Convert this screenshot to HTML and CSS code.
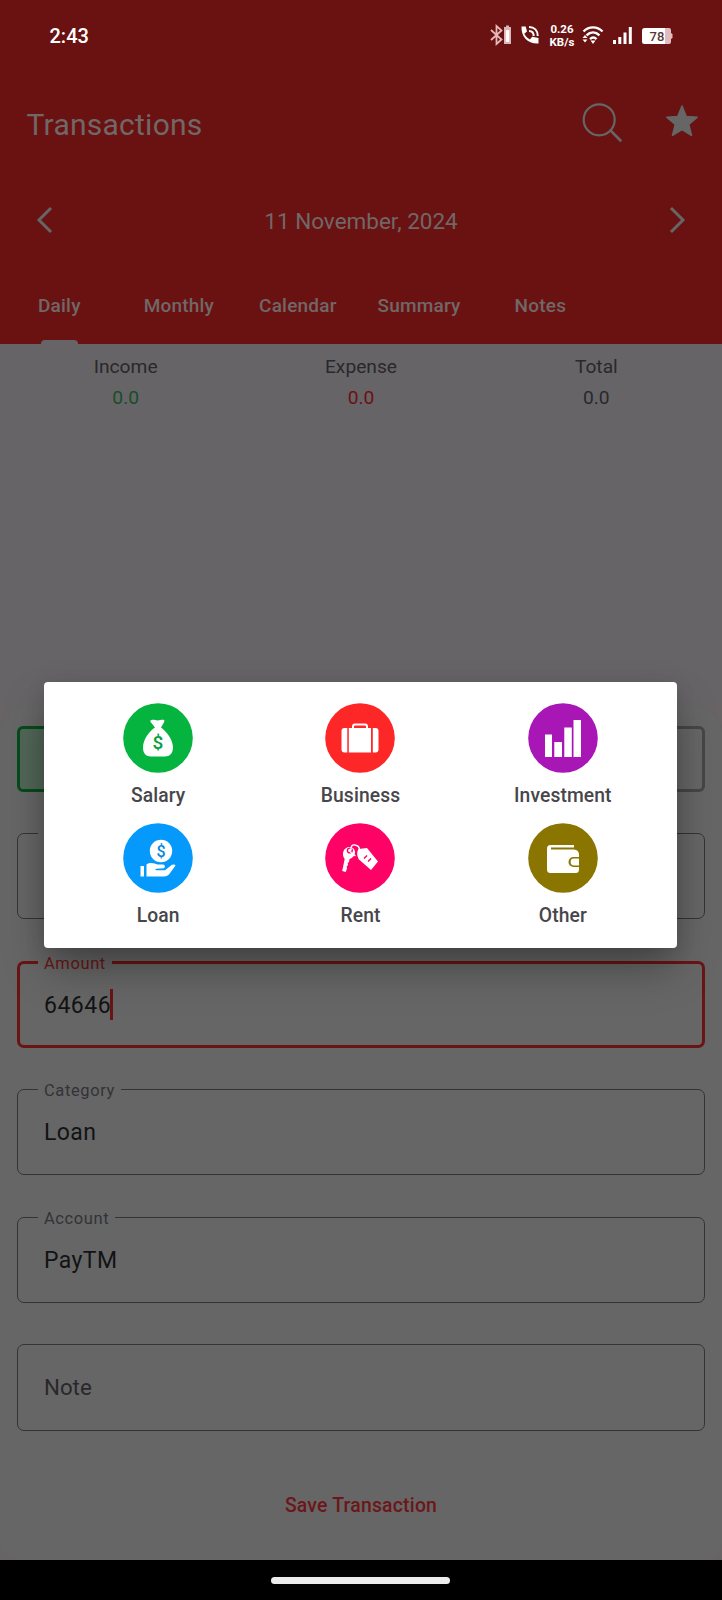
FILE: index.html
```html
<!DOCTYPE html>
<html lang="en">
<head>
<meta charset="utf-8">
<title>Transactions</title>
<link rel="stylesheet" href="styles.css">
</head>
<body>
<div class="screen">
  <header class="header">
    <div class="status">
      <span class="clock">2:43</span>
      <svg class="status-icons" viewBox="0 0 190 30" width="190" height="30">
        <g fill="none" stroke="#e5b9b9" stroke-width="1.800"><path d="M3 10l10.500 9.500-5 4.500V6l5 4.500L3 20"/></g>
        <path d="M16 7h2V5.500h3V7h2v17h-7z" fill="#d9b5b5"/><path d="M17.800 10h3.500v12h-3.500z" fill="#fff"/>
        <path d="M33.500 6.500h4.200l1.300 5-2.700 2.300c1.300 2.600 3 4.300 5.600 5.600l2.300-2.700 6.300 1.300v5.500C39.500 24 33 16.500 33.500 6.500z" fill="#fff"/>
        <g fill="none" stroke="#fff" stroke-width="2"><path d="M41 7c5.500 0 8.700 3.500 8.700 9M41 11c3 0 4.700 2 4.700 5"/></g>
        <g transform="translate(4 0)">
          <g class="speed"><text x="70" y="13.200" textLength="23">0.26</text><text x="70" y="26" textLength="25">KB/s</text></g>
          <g fill="none" stroke="#fff" stroke-width="2.400"><path d="M91.500 11.500c5.500-5.500 13.500-5.500 19 0M94.500 15.400c4-4 9-4 13 0M98 19.200c2-2 4.500-2 6.500 0"/></g>
          <path d="M98.500 20.500h5L101 24zM90.500 18l2.500-3 2.500 3zM90.500 19.500h5l-2.500 3z" fill="#fff"/>
          <path d="M121 20h3v4h-3zM126.300 17h3v7h-3zM131.500 12.500h3V24h-3zM136.800 7h3v17h-3z" fill="#fff"/>
          <path d="M172 8h5q2 0 2 2v3l1.500 1v4l-1.500 1v3q0 2-2 2h-5z" fill="#e0bcbc"/>
          <path d="M152.500 8H173v16h-20.500q-2.500 0-2.500-2.500v-11q0-2.500 2.500-2.500z" fill="#fff"/>
          <text class="battery" x="165" y="20.500">78</text>
        </g>
      </svg>
    </div>
    <div class="titlebar">
      <h1>Transactions</h1>
      <svg class="search" viewBox="0 0 40 42" width="40" height="42"><g fill="none" stroke="#666" stroke-width="2.200" stroke-linecap="round"><circle cx="17.200" cy="17.800" r="15.500"/><path d="M28.500 28.500l10 10" stroke-width="2.600"/></g></svg>
      <svg class="star" viewBox="0 0 34 34" width="34" height="34"><path d="M17 2l4.200 10.400 11 .8-8.400 7.200 2.700 11-9.500-5.900-9.500 5.900 2.700-11L1.800 13.200l11-.8z" fill="#666" stroke="#666" stroke-width="1.500" stroke-linejoin="round"/></svg>
    </div>
    <div class="datebar">
      <svg viewBox="0 0 18 28" width="18" height="28"><path d="M15 2L3 14l12 12" fill="none" stroke="#666" stroke-width="3"/></svg>
      <span class="date">11 November, 2024</span>
      <svg viewBox="0 0 18 28" width="18" height="28"><path d="M3 2l12 12L3 26" fill="none" stroke="#666" stroke-width="3"/></svg>
    </div>
    <nav class="tabs">
      <span class="tab active">Daily</span><span class="tab monthly">Monthly</span><span class="tab calendar">Calendar</span><span class="tab summary">Summary</span><span class="tab notes">Notes</span>
    </nav>
  </header>

  <section class="totals">
    <div class="total"><span>Income</span><span class="green">0.0</span></div>
    <div class="total"><span>Expense</span><span class="red">0.0</span></div>
    <div class="total"><span>Total</span><span>0.0</span></div>
  </section>

  <div class="sheet-wrap">
    <section class="sheet">
      <div class="types"><div class="type income"></div><div class="type expense"></div></div>
      <fieldset class="field"><legend>Date</legend></fieldset>
      <fieldset class="field focused"><legend>Amount</legend><span class="value">64646</span><i class="cursor"></i></fieldset>
      <fieldset class="field"><legend>Category</legend><span class="value">Loan</span></fieldset>
      <fieldset class="field"><legend>Account</legend><span class="value">PayTM</span></fieldset>
      <div class="field empty"><span class="hint">Note</span></div>
      <div class="save">Save Transaction</div>
    </section>
  </div>
  <footer class="navbar"><div class="pill"></div></footer>

  <div class="dialog">
    <div class="item">
      <svg viewBox="0 0 70 70"><circle cx="35" cy="35" r="34.800" fill="#05b43f"/>
        <path d="M27.500 17.500c2.500-1.500 4.500 0 7 0s4.500-1 6.500-.5c1.200.7-.5 3.500-3 7.500 5 3.500 12 12 12 20 0 6-3.500 9-8 9H28c-5 0-8-3-8-9 0-8 6.500-16.500 12-20-2.500-3.500-5.500-6-4.500-7z" fill="#fff"/><text class="coin bag" x="35" y="45.500">$</text></svg>
      <span>Salary</span>
    </div>
    <div class="item">
      <svg viewBox="0 0 70 70"><circle cx="35" cy="35" r="34.800" fill="#fd2727"/>
        <path d="M28 25v-1.500q0-2 2-2h10q2 0 2 2V25" fill="none" stroke="#fff" stroke-width="2"/>
        <path d="M19.500 25h2.800v24.500h-2.800q-3 0-3-3V28q0-3 3-3zM23.800 25H46v24.500H23.800zM47.800 25h2.700q3 0 3 3v18.500q0 3-3 3h-2.700z" fill="#fff"/></svg>
      <span>Business</span>
    </div>
    <div class="item">
      <svg viewBox="0 0 70 70"><circle cx="35" cy="35" r="34.800" fill="#a916b6"/>
        <path d="M17 31.500h7V54h-7zM26.300 39H34v15h-7.700zM36.300 24.500h7.500V54h-7.500zM45.500 17H53v37h-7.500z" fill="#fff"/></svg>
      <span>Investment</span>
    </div>
    <div class="item">
      <svg viewBox="0 0 70 70"><circle cx="35" cy="35" r="34.800" fill="#0599fb"/>
        <circle cx="38" cy="28" r="11.200" fill="#fff"/><text class="coin loan" x="38" y="34">$</text>
        <path d="M17.500 43H21v10.500h-3.500zM23.500 41.500c4-3 8-1 11 0h6q2.500 1.500.5 3.800l-7.500.5c-1.500.2-1.500 1.500 0 1.500h8.500l7-5.500q3-1 3.500.8L46 51.500q-2 2-5 2H23.500z" fill="#fff"/></svg>
      <span>Loan</span>
    </div>
    <div class="item">
      <svg viewBox="0 0 70 70"><circle cx="35" cy="35" r="34.800" fill="#fe0266"/>
        <path d="M22 24.500c4-1.500 7.500.5 8 4 .3 3.500-2 6.500-5.500 7.500l-.5 3-1.300 1 .3 2-1.300 1.500.3 2-1.300 3.500-3.500-1 2.500-12c-3-4-2-9.500 2.300-11.500z" fill="#fff"/>
        <circle cx="24.800" cy="27.500" r="2.400" fill="none" stroke="#fe0266" stroke-width="1.400"/>
        <path d="M26 27c-.5-4 1.500-5.500 4-5 3 .5 4.500 2.500 4.500 5M25.500 28.500c1 2.500 3 4 5 4" fill="none" stroke="#fff" stroke-width="1.400"/>
        <path d="M33.500 26l8.500-1 11 13.500-7 8.500-12-10.500c-2-3-2.500-7.500-.5-10.500z" fill="#fff"/>
        <path d="M39 35.500l3-3M43 38.500l3-3" stroke="#fe0266" stroke-width="1.500"/></svg>
      <span>Rent</span>
    </div>
    <div class="item">
      <svg viewBox="0 0 70 70"><circle cx="35" cy="35" r="34.800" fill="#8a7500"/>
        <path d="M22.500 22H46v2.600H23v1.800h23q4.500.3 5 4.600V34h-5.500a5 5 0 0 0 0 10H51v2.500q0 3.500-3.500 3.500h-25q-3.500 0-3.500-3.500v-21q0-3.500 3.500-3.500z" fill="#fff"/>
        <path d="M51 35.600h-5a3.300 3.300 0 0 0 0 6.800h5z" fill="#fff"/></svg>
      <span>Other</span>
    </div>
  </div>
</div>
</body>
</html>
```
FILE: styles.css
```css
* { box-sizing: border-box; }
body { margin: 0; font-family: Roboto, "Liberation Sans", sans-serif; }
.screen { position: relative; width: 722px; height: 1600px; overflow: hidden; display: flex; flex-direction: column; background: #676467; color: #29282c; }
svg { display: block; flex: none; }

.header { height: 344px; background: #6a1212; color: #716767; display: flex; flex-direction: column; }
.status { height: 72px; padding: 20px 44px 0 49.5px; display: flex; justify-content: space-between; }
.clock { color: #fff; font-size: 20px; font-weight: 500; line-height: 32px; }
.speed { fill: #fff; font-size: 11.5px; font-weight: 700; text-anchor: middle; }
.battery { fill: #553737; font-size: 13px; font-weight: 500; text-anchor: middle; }
.titlebar { height: 104px; padding: 0 23px 4px 26.5px; display: flex; align-items: center; }
h1 { margin: 6px auto 0 0; font-size: 30px; font-weight: 400; line-height: 36px; letter-spacing: .25px; }
.search { margin: 2px 43px 0 0; }
.star { margin-top: -2px; }
.datebar { height: 88px; padding: 0 36px; display: flex; align-items: center; justify-content: space-between; }
.date { font-size: 22.5px; padding-top: 2px; }
.tabs { height: 80px; display: flex; align-items: center; padding-left: 38px; font-size: 19px; font-weight: 500; color: #716767; letter-spacing: .2px; }
.tab { position: relative; height: 100%; padding-top: 2px; display: flex; align-items: center; margin-right: 63px; }
.monthly { margin-right: 45px; }
.calendar { margin-right: 41px; }
.summary { margin-right: 54px; }
.active::after { content: ""; position: absolute; left: 3px; bottom: 0; width: 37px; height: 4px; border-radius: 4px 4px 0 0; background: #676467; }

.totals { height: 362px; padding: 7px 8px 0; display: grid; grid-template-columns: repeat(3, 1fr); }
.total { display: flex; flex-direction: column; align-items: center; font-size: 19.2px; line-height: 31px; }
.green { color: #164e29; }
.red { color: #6b1013; }

.sheet-wrap { height: 854px; background: #686365; }
.sheet { height: 854px; border-radius: 28px 28px 18px 18px; background: #666; padding: 20px 17px 0; display: flex; flex-direction: column; }
.types { display: flex; gap: 16px; height: 66px; margin-bottom: 31px; flex: none; }
.type { flex: 1; border: 3px solid #464646; border-radius: 6px; }
.income { border-color: #064b1c; background: #526657; }
.field { position: relative; min-width: 0; height: 96px; margin: 0 0 32px; padding: 0 0 0 26px; border: 1.5px solid #343434; border-radius: 7px; flex: none; display: block; }
legend { margin-left: -6px; padding: 0 6px; height: 20px; font-size: 16.5px; line-height: 23px; letter-spacing: .6px; color: #333236; }
.value { display: inline-block; font-size: 23px; line-height: 28px; letter-spacing: .4px; color: #131314; padding-top: 20px; }
.focused { border: 3px solid #6a1414; padding-left: 24px; margin-top: 1px; margin-bottom: 31px; }
.focused legend { color: #6a1717; }
.focused .value { letter-spacing: .5px; }
.cursor { display: inline-block; width: 3px; height: 31px; margin-left: -1px; vertical-align: -7px; background: #6a1414; }
.empty { height: 87px; margin-top: 9px; padding-bottom: 2px; display: flex; align-items: center; }
.hint { font-size: 22.3px; color: #29282c; }
.save { text-align: center; margin-top: 31px; font-size: 19.4px; line-height: 24px; font-weight: 500; letter-spacing: .2px; color: #6b171a; }

.navbar { height: 40px; background: #000; display: flex; justify-content: center; padding: 17px 1px 0 0; }
.pill { width: 179px; height: 7px; border-radius: 4px; background: #ececec; }

.dialog { position: absolute; left: 44px; top: 682px; width: 633px; height: 266px; padding: 21px 13px 0; border-radius: 4px; background: #fff; box-shadow: 0 22px 40px -4px rgba(0,0,0,.34), 0 4px 20px rgba(0,0,0,.1); display: grid; grid-template-columns: repeat(3, 1fr); grid-auto-rows: 120px; }
.item { display: flex; flex-direction: column; align-items: center; font-size: 19.3px; font-weight: 500; line-height: 24px; letter-spacing: .1px; color: #47464a; gap: 11px; }
.item svg { width: 70px; height: 70px; }
.coin { font-weight: 500; text-anchor: middle; letter-spacing: 0; }
.bag { font-size: 19px; fill: #05a03a; }
.loan { font-size: 16px; fill: #0588dd; }
```
